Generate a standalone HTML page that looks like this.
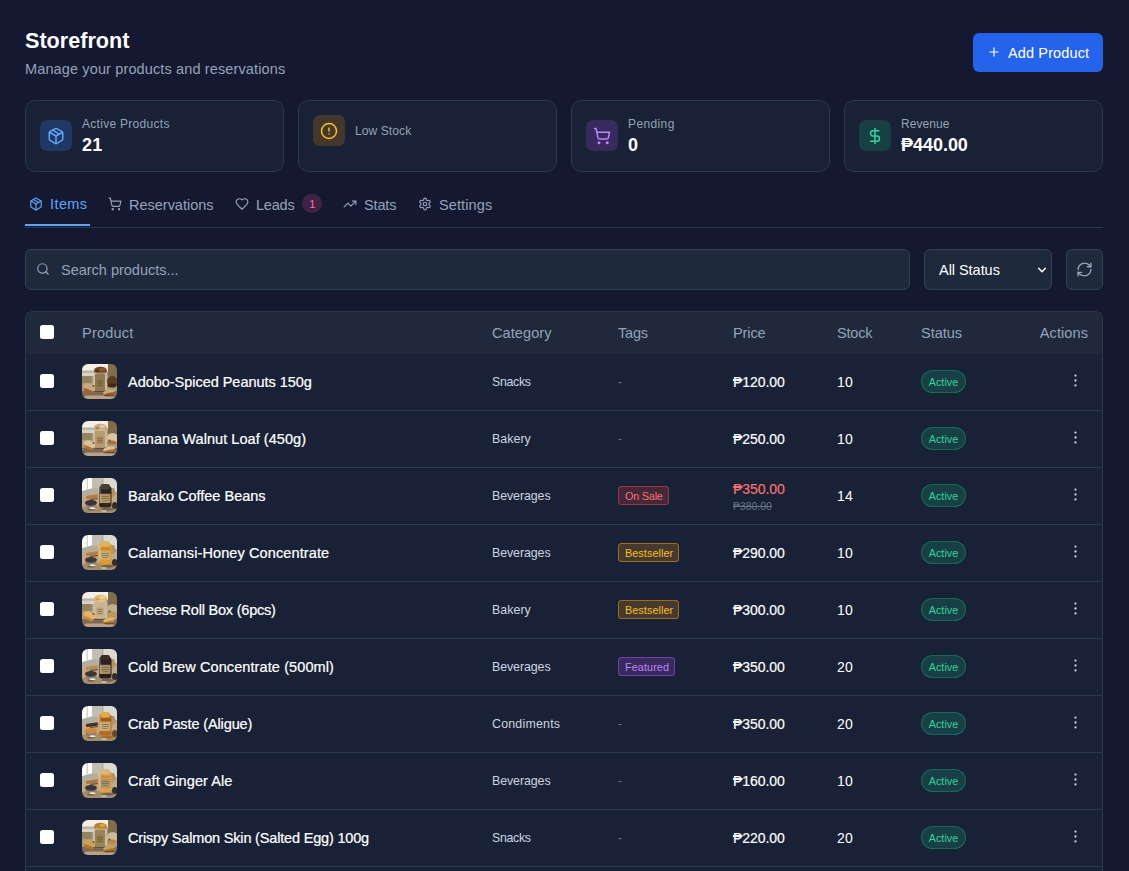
<!DOCTYPE html>
<html lang="en">
<head>
<meta charset="utf-8">
<title>Storefront</title>
<style>
*{box-sizing:border-box;margin:0;padding:0}
html,body{width:1129px;height:871px;overflow:hidden}
body{background:#141831;color:#f1f5f9;font-family:"Liberation Sans",sans-serif;font-size:14px;position:relative}
svg{display:block}
i{font-style:normal}
.ic{fill:none;stroke:currentColor;stroke-width:2;stroke-linecap:round;stroke-linejoin:round}
h1{position:absolute;left:25px;top:27px;font-size:21.600px;line-height:28px;font-weight:700;color:#fff;white-space:nowrap}
.sub{position:absolute;left:25px;top:58px;line-height:21px;color:#94a3b8;white-space:nowrap}
.add{position:absolute;left:973px;top:33px;width:130px;height:39px;background:#2563eb;border-radius:6px;color:#fff;white-space:nowrap}
.add svg{position:absolute;left:14px;top:12px;width:14px;height:14px}
.add .addt{position:absolute;left:35px;top:9px;line-height:21px}
.card{position:absolute;top:100px;width:259px;height:72px;background:#192136;border:1px solid #2c384c;border-radius:10px}
.card .ib{position:absolute;left:14px;top:19px;width:32px;height:31px;border-radius:7px;display:flex;align-items:center;justify-content:center}
.card .ib2{top:14px}
.card .ib svg{width:18px;height:18px}
.card .lb{position:absolute;left:56px;top:14px;font-size:12px;line-height:18px;color:#94a3b8;white-space:nowrap}
.card .lb2{top:21px}
.card .vl{position:absolute;left:56px;top:31px;font-size:18px;line-height:24px;font-weight:700;color:#fff;white-space:nowrap}
.tabs{position:absolute;left:25px;top:184px;width:1078px;height:44px;border-bottom:1px solid #2c384c}
.tab{position:absolute;top:0;height:42px;padding:0 0 2px;display:flex;align-items:center;color:#94a3b8;white-space:nowrap}
.tab svg{width:14px;height:14px;margin-right:7px;flex:none}
.tab .tt{line-height:21px}
.tab.on{color:#60a5fa;border-bottom:2px solid #60a5fa;width:65px;padding:0 4px 1px}
.badge{position:relative;top:-1px;margin-left:8px;width:20px;height:19px;border-radius:10px;background:#3f2246;color:#f472b6;font-size:11px;line-height:19px;text-align:center}
.search{position:absolute;left:25px;top:249px;width:885px;height:41px;background:#1e293b;border:1px solid #334155;border-radius:6px;color:#94a3b8}
.search svg{position:absolute;left:10px;top:12px;width:14px;height:14px}
.search .ph{position:absolute;left:35px;top:9px;line-height:21px;white-space:nowrap}
.sel{position:absolute;left:924px;top:249px;width:128px;height:41px;background:#1e293b;border:1px solid #334155;border-radius:6px;color:#fff}
.sel .sv{position:absolute;left:14px;top:9px;line-height:21px;white-space:nowrap}
.sel svg{position:absolute;left:112px;top:15px;width:10px;height:10px}
.ref{position:absolute;left:1066px;top:249px;width:37px;height:41px;background:#1e293b;border:1px solid #334155;border-radius:6px;color:#94a3b8;display:flex;align-items:center;justify-content:center}
.ref svg{width:17px;height:17px}
.tbl{position:absolute;left:25px;top:311px;width:1078px;height:600px;background:#192136;border:1px solid #2c384c;border-radius:8px}
.row{position:relative;height:57px;border-bottom:1px solid #2c384c}
.row.h{height:42px;background:#1f293b;border-bottom:none;color:#94a3b8}
.row>*{position:absolute;top:50%;transform:translateY(-50%);white-space:nowrap}
.cb{left:14px;width:14px;height:14px;background:#fff;border-radius:2.500px;margin-top:-1px}
.c1{left:56px}.c2{left:466px}.c3{left:592px}.c4{left:707px}.c5{left:811px}.c6{left:895px}.c7{right:14px}
.row.h>*{line-height:20px}
.row.h .cb{margin-top:-1px}
.th{left:56px;width:35px;height:35px;border-radius:6px;overflow:hidden;top:10px;transform:none}
.nm{left:102px;color:#fff;line-height:20px}
.cat{font-size:12px;color:#cbd5e1;line-height:18px}
.dash{font-size:12px;color:#64748b;line-height:18px}
.pr{color:#fff;line-height:20px}
.st{color:#fff;line-height:20px}
.tag{font-size:10.500px;line-height:18.500px;height:19px;padding:0 5px 0 6px;top:18px;transform:none;border-radius:3.500px;border:1px solid}
.t-sale{color:#f87171;background:rgba(239,68,68,.2);border-color:rgba(239,68,68,.5)}
.t-best{color:#fbbf24;background:rgba(245,158,11,.2);border-color:rgba(245,158,11,.5)}
.t-feat{color:#c084fc;background:rgba(168,85,247,.2);border-color:rgba(168,85,247,.5)}
.act{font-size:10.500px;line-height:23px;height:23px;width:45px;text-align:center;border-radius:12px;border:1px solid rgba(16,185,129,.35);background:rgba(16,185,129,.2);color:#34d399;top:16px;transform:none}
.dots{right:18px;width:17px;height:17px;color:#cbd5e1;top:18px;transform:none}
.dots svg{width:17px;height:17px}
.sale{color:#f87171;margin-top:1px}
.sale b{display:block;font-weight:400;line-height:17px;position:relative;top:-.7px}
.sale small{display:block;font-size:10.500px;color:#64748b;text-decoration:line-through;line-height:13px;margin-top:2px}
.sub,.addt,.tt,.ph,.sv,.row.h>div,.nm{font-size:14.500px}
.lb,.cat{font-size:12.400px}
.tag,.act{font-size:10.800px}
.sub,.addt,.vl,.ph,.sv{margin-top:1px}
.tt{position:relative;top:1px}
.badge{line-height:21px}
.sale b{top:0}
.nm{-webkit-text-stroke:.22px currentColor}
.pr,.sale b{-webkit-text-stroke:.18px currentColor}
</style>
</head>
<body>
<svg width="0" height="0" style="position:absolute"><defs><filter id="bl" x="-10%" y="-10%" width="120%" height="120%"><feGaussianBlur stdDeviation="0.550"/></filter></defs></svg>
<h1>Storefront</h1>
<div class="sub" style="letter-spacing:0.13px">Manage your products and reservations</div>
<div class="add"><svg class="ic" viewBox="0 0 24 24"><path d="M5 12h14M12 5v14"/></svg><span class="addt" style="letter-spacing:0.13px">Add Product</span></div>

<div class="card" style="left:25px"><div class="ib" style="background:#1f3864;color:#60a5fa"><svg class="ic" viewBox="0 0 24 24"><path d="m7.5 4.270 9 5.150"/><path d="M21 8a2 2 0 0 0-1-1.730l-7-4a2 2 0 0 0-2 0l-7 4A2 2 0 0 0 3 8v8a2 2 0 0 0 1 1.730l7 4a2 2 0 0 0 2 0l7-4A2 2 0 0 0 21 16Z"/><path d="m3.300 7 8.700 5 8.700-5"/><path d="M12 22V12"/></svg></div><div class="lb" style="letter-spacing:0.29px">Active Products</div><div class="vl" style="letter-spacing:0.28px">21</div></div>
<div class="card" style="left:298px"><div class="ib ib2" style="background:#44382c;color:#fbbf24"><svg class="ic" viewBox="0 0 24 24"><circle cx="12" cy="12" r="10"/><path d="M12 8v4M12 16h.010"/></svg></div><div class="lb lb2" style="letter-spacing:0.10px">Low Stock</div></div>
<div class="card" style="left:571px"><div class="ib" style="background:#362b5c;color:#c084fc"><svg class="ic" viewBox="0 0 24 24"><circle cx="8" cy="21" r="1"/><circle cx="19" cy="21" r="1"/><path d="M2.050 2.050h2l2.660 12.420a2 2 0 0 0 2 1.580h9.780a2 2 0 0 0 1.950-1.570l1.650-7.430H5.120"/></svg></div><div class="lb" style="letter-spacing:0.38px">Pending</div><div class="vl" style="letter-spacing:0.28px">0</div></div>
<div class="card" style="left:844px"><div class="ib" style="background:#183f44;color:#34d399"><svg class="ic" viewBox="0 0 24 24"><path d="M12 2v20"/><path d="M17 5H9.500a3.500 3.500 0 0 0 0 7h5a3.500 3.500 0 0 1 0 7H6"/></svg></div><div class="lb" style="letter-spacing:0.06px">Revenue</div><div class="vl" style="letter-spacing:-0.03px">₱440.00</div></div>

<div class="tabs">
<div class="tab on" style="left:0"><svg class="ic" viewBox="0 0 24 24"><path d="m7.5 4.270 9 5.150"/><path d="M21 8a2 2 0 0 0-1-1.730l-7-4a2 2 0 0 0-2 0l-7 4A2 2 0 0 0 3 8v8a2 2 0 0 0 1 1.730l7 4a2 2 0 0 0 2 0l7-4A2 2 0 0 0 21 16Z"/><path d="m3.300 7 8.700 5 8.700-5"/><path d="M12 22V12"/></svg><span class="tt" style="letter-spacing:0.41px">Items</span></div>
<div class="tab" style="left:83px"><svg class="ic" viewBox="0 0 24 24"><circle cx="8" cy="21" r="1"/><circle cx="19" cy="21" r="1"/><path d="M2.050 2.050h2l2.660 12.420a2 2 0 0 0 2 1.580h9.780a2 2 0 0 0 1.950-1.570l1.650-7.430H5.120"/></svg><span class="tt" style="letter-spacing:-0.01px">Reservations</span></div>
<div class="tab" style="left:210px"><svg class="ic" viewBox="0 0 24 24"><path d="M19 14c1.490-1.460 3-3.210 3-5.500A5.500 5.500 0 0 0 16.500 3c-1.760 0-3 .500-4.500 2-1.500-1.500-2.740-2-4.500-2A5.500 5.500 0 0 0 2 8.500c0 2.300 1.500 4.050 3 5.500l7 7Z"/></svg><span class="tt" style="letter-spacing:-0.22px">Leads</span><i class="badge" style="letter-spacing:0.17px">1</i></div>
<div class="tab" style="left:318px"><svg class="ic" viewBox="0 0 24 24"><path d="M22 7 13.500 15.500 8.500 10.500 2 17"/><path d="M16 7h6v6"/></svg><span class="tt" style="letter-spacing:-0.14px">Stats</span></div>
<div class="tab" style="left:393px"><svg class="ic" viewBox="0 0 24 24"><path d="M12.220 2h-.440a2 2 0 0 0-2 2v.180a2 2 0 0 1-1 1.730l-.430.250a2 2 0 0 1-2 0l-.150-.080a2 2 0 0 0-2.730.730l-.220.380a2 2 0 0 0 .730 2.730l.150.100a2 2 0 0 1 1 1.720v.510a2 2 0 0 1-1 1.740l-.150.090a2 2 0 0 0-.730 2.730l.220.380a2 2 0 0 0 2.730.730l.150-.080a2 2 0 0 1 2 0l.430.250a2 2 0 0 1 1 1.730V20a2 2 0 0 0 2 2h.440a2 2 0 0 0 2-2v-.180a2 2 0 0 1 1-1.730l.430-.250a2 2 0 0 1 2 0l.150.080a2 2 0 0 0 2.730-.730l.220-.390a2 2 0 0 0-.730-2.730l-.150-.080a2 2 0 0 1-1-1.740v-.500a2 2 0 0 1 1-1.740l.150-.090a2 2 0 0 0 .730-2.730l-.220-.380a2 2 0 0 0-2.730-.730l-.150.080a2 2 0 0 1-2 0l-.430-.250a2 2 0 0 1-1-1.730V4a2 2 0 0 0-2-2z"/><circle cx="12" cy="12" r="3"/></svg><span class="tt" style="letter-spacing:0.11px">Settings</span></div>
</div>

<div class="search"><svg class="ic" viewBox="0 0 24 24"><circle cx="11" cy="11" r="8"/><path d="m21 21-4.300-4.300"/></svg><span class="ph" style="letter-spacing:-0.01px">Search products...</span></div>
<div class="sel"><span class="sv" style="letter-spacing:-0.04px">All Status</span><svg class="ic" viewBox="0 0 24 24" style="stroke-width:3.500"><path d="m4 8 8 8 8-8"/></svg></div>
<div class="ref"><svg class="ic" viewBox="0 0 24 24"><path d="M3 12a9 9 0 0 1 9-9 9.750 9.750 0 0 1 6.740 2.740L21 8"/><path d="M21 3v5h-5"/><path d="M21 12a9 9 0 0 1-9 9 9.750 9.750 0 0 1-6.740-2.740L3 16"/><path d="M8 16H3v5"/></svg></div>

<div class="tbl">
<div class="row h"><div class="cb"></div><div class="c1" style="letter-spacing:0.21px">Product</div><div class="c2" style="letter-spacing:0.10px">Category</div><div class="c3" style="letter-spacing:-0.20px">Tags</div><div class="c4" style="letter-spacing:-0.11px">Price</div><div class="c5" style="letter-spacing:-0.17px">Stock</div><div class="c6" style="letter-spacing:-0.02px">Status</div><div class="c7" style="letter-spacing:0.09px">Actions</div></div>
<div class="row"><div class="cb"></div><div class="th"><svg viewBox="0 0 35 35" width="35" height="35"><g filter="url(#bl)"><rect x="-3" y="-3" width="41" height="41" fill="#a8977c"/><rect x="-3" y="-3" width="29" height="10.500" fill="#f3efe7"/><rect x="-3" y="6.500" width="15" height="2" fill="#b9b0a0"/><rect x="-3" y="8.500" width="15" height="3.500" fill="#d8d2c6"/><rect x="26" y="-3" width="12" height="16" fill="#816d4c"/><rect x="-3" y="12" width="12.500" height="7" fill="#93835f"/><rect x="-3" y="19" width="41" height="8" fill="#b09b7c"/><rect x="-3" y="27" width="41" height="11" fill="#7c6a57"/><path d="M4 31.500h26l8 6.500H-3z" fill="#b8a283"/><ellipse cx="18.500" cy="6.500" rx="6.500" ry="3.800" fill="#6f4521"/><ellipse cx="20.500" cy="5.300" rx="3" ry="1.800" fill="#8a5a2c"/><circle cx="15.500" cy="7.500" r="1.300" fill="#3f2918"/><rect x="11" y="8.500" width="14" height="18.500" rx="2" fill="#e6e0d4" opacity=".5"/><rect x="12.300" y="26.300" width="12" height="1.600" rx=".800" fill="#4d3f33" opacity=".7"/><rect x="13" y="9.800" width="10" height="17" rx="1.300" fill="#8f7a50"/><rect x="14.500" y="15.500" width="7" height="7.500" fill="#85714a"/><rect x="15.500" y="17" width="5" height=".800" fill="#5d4a33" opacity=".55"/><rect x="15.500" y="19" width="5" height=".800" fill="#5d4a33" opacity=".55"/><rect x="16" y="21" width="4" height=".800" fill="#5d4a33" opacity=".45"/><ellipse cx="30.500" cy="17.500" rx="5.500" ry="5.500" fill="#5b3c22"/><ellipse cx="30" cy="21.500" rx="4.500" ry="2" fill="#3f2918"/><circle cx="27.500" cy="19.500" r="1.100" fill="#4a3423" opacity=".8"/><ellipse cx="7.500" cy="23.500" rx="6" ry="3.800" fill="#c9ab80" transform="rotate(22 7.500 23.500)"/><ellipse cx="6.500" cy="26.800" rx="5.500" ry="1.500" fill="#a5602a" transform="rotate(22 6.500 26.800)"/><circle cx="11.500" cy="22" r="1.100" fill="#4a3423" opacity=".7"/><ellipse cx="27" cy="28" rx="6" ry="2.400" fill="#c9ab80" transform="rotate(-12 27 28)"/><ellipse cx="27.500" cy="29.800" rx="5.500" ry="1.200" fill="#a5602a" transform="rotate(-12 27.500 29.800)"/><ellipse cx="27" cy="31.500" rx="5" ry=".900" fill="#3d3128" opacity=".6"/></g></svg></div><div class="nm" style="letter-spacing:-0.03px">Adobo-Spiced Peanuts 150g</div><div class="c2 cat" style="letter-spacing:-0.33px">Snacks</div><div class="c3 dash" style="letter-spacing:-0.12px">-</div><div class="c4 pr" style="letter-spacing:-0.05px">₱120.00</div><div class="c5 st" style="letter-spacing:0.23px">10</div><div class="c6 act" style="letter-spacing:0.02px">Active</div><div class="dots"><svg viewBox="0 0 24 24" fill="currentColor"><circle cx="12" cy="5" r="1.600"/><circle cx="12" cy="12" r="1.600"/><circle cx="12" cy="19" r="1.600"/></svg></div></div>
<div class="row"><div class="cb"></div><div class="th"><svg viewBox="0 0 35 35" width="35" height="35"><g filter="url(#bl)"><rect x="-3" y="-3" width="41" height="41" fill="#a8977c"/><rect x="-3" y="-3" width="29" height="10.500" fill="#f3efe7"/><rect x="-3" y="6.500" width="15" height="2" fill="#b9b0a0"/><rect x="-3" y="8.500" width="15" height="3.500" fill="#d8d2c6"/><rect x="26" y="-3" width="12" height="16" fill="#816d4c"/><rect x="-3" y="12" width="12.500" height="7" fill="#93835f"/><rect x="-3" y="19" width="41" height="8" fill="#b09b7c"/><rect x="-3" y="27" width="41" height="11" fill="#7c6a57"/><path d="M4 31.500h26l8 6.500H-3z" fill="#b8a283"/><ellipse cx="18.500" cy="6.500" rx="6.500" ry="3.800" fill="#c9a574"/><ellipse cx="20.500" cy="5.300" rx="3" ry="1.800" fill="#e0c79d"/><circle cx="15.500" cy="7.500" r="1.300" fill="#a87238"/><rect x="11" y="8.500" width="14" height="18.500" rx="2" fill="#e6e0d4" opacity=".5"/><rect x="12.300" y="26.300" width="12" height="1.600" rx=".800" fill="#4d3f33" opacity=".7"/><rect x="13" y="9.800" width="10" height="17" rx="1.300" fill="#b89a6c"/><rect x="14.500" y="15.500" width="7" height="7.500" fill="#a98c5e"/><rect x="15.500" y="17" width="5" height=".800" fill="#5d4a33" opacity=".55"/><rect x="15.500" y="19" width="5" height=".800" fill="#5d4a33" opacity=".55"/><rect x="16" y="21" width="4" height=".800" fill="#5d4a33" opacity=".45"/><ellipse cx="30.500" cy="17.500" rx="5.500" ry="5.500" fill="#dcc6a0"/><ellipse cx="30" cy="21.500" rx="4.500" ry="2" fill="#a87238"/><circle cx="27.500" cy="19.500" r="1.100" fill="#4a3423" opacity=".8"/><ellipse cx="7.500" cy="23.500" rx="6" ry="3.800" fill="#dbc196" transform="rotate(22 7.500 23.500)"/><ellipse cx="6.500" cy="26.800" rx="5.500" ry="1.500" fill="#b07634" transform="rotate(22 6.500 26.800)"/><circle cx="11.500" cy="22" r="1.100" fill="#4a3423" opacity=".7"/><ellipse cx="27" cy="28" rx="6" ry="2.400" fill="#dbc196" transform="rotate(-12 27 28)"/><ellipse cx="27.500" cy="29.800" rx="5.500" ry="1.200" fill="#b07634" transform="rotate(-12 27.500 29.800)"/><ellipse cx="27" cy="31.500" rx="5" ry=".900" fill="#3d3128" opacity=".6"/></g></svg></div><div class="nm" style="letter-spacing:0.05px">Banana Walnut Loaf (450g)</div><div class="c2 cat" style="letter-spacing:0.04px">Bakery</div><div class="c3 dash" style="letter-spacing:-0.12px">-</div><div class="c4 pr" style="letter-spacing:-0.05px">₱250.00</div><div class="c5 st" style="letter-spacing:0.23px">10</div><div class="c6 act" style="letter-spacing:0.02px">Active</div><div class="dots"><svg viewBox="0 0 24 24" fill="currentColor"><circle cx="12" cy="5" r="1.600"/><circle cx="12" cy="12" r="1.600"/><circle cx="12" cy="19" r="1.600"/></svg></div></div>
<div class="row"><div class="cb"></div><div class="th"><svg viewBox="0 0 35 35" width="35" height="35"><g filter="url(#bl)"><rect x="-3" y="-3" width="41" height="41" fill="#c4beb2"/><rect x="21" y="-3" width="17" height="20" fill="#dcd9d1"/><rect x="20.300" y="-3" width="1" height="18" fill="#aaa397"/><path d="M-3-3h13v13.500L-3 14z" fill="#fcfcfa"/><rect x="4.600" y="-3" width="1.400" height="15" fill="#d4d3cc"/><path d="M-3 14 10 10.500h6V15L-3 19.500z" fill="#b3ad9f"/><path d="M-3 19.500 16 15l22-1v24H-3z" fill="#c2a884"/><path d="M-3 29 38 26.500V38H-3z" fill="#a68d6b"/><rect x="4" y="17" width="12" height="3.400" rx="1.500" fill="#b97a3c" transform="rotate(-8 10 19)"/><rect x="8" y="20.300" width="8" height="1.300" rx=".600" fill="#3b2c20" opacity=".7" transform="rotate(-6 12 21)"/><ellipse cx="9" cy="27" rx="5.600" ry="4.200" fill="#8a8279"/><ellipse cx="9" cy="24.800" rx="6" ry="2.900" fill="#3a3331"/><ellipse cx="10.500" cy="30.300" rx="3" ry="1.100" fill="#eeeae2"/><ellipse cx="9" cy="31.800" rx="4" ry=".800" fill="#3a2f28" opacity=".55"/><path d="M27.500 10h4.500l2.300 6-3.800 3.500h-3z" fill="#b29463"/><rect x="17" y="8" width="12.500" height="21.500" rx="3.200" fill="#33261f"/><rect x="18.500" y="6" width="9.500" height="5.500" rx="2.200" fill="#4a4036"/><rect x="17.800" y="12.500" width="11" height="2.600" fill="#2a2330" opacity=".75"/><rect x="18" y="15.800" width="10.500" height="9.200" rx=".800" fill="#b3935f"/><rect x="19.500" y="18" width="7.500" height=".800" fill="#5a4630" opacity=".55"/><rect x="19.500" y="20" width="7.500" height=".800" fill="#5a4630" opacity=".55"/><rect x="20.500" y="22" width="5.500" height=".800" fill="#5a4630" opacity=".45"/><rect x="17.300" y="9.500" width="1.200" height="16" rx=".600" fill="#fff" opacity=".4"/><ellipse cx="32.800" cy="27.500" rx="2.800" ry="3.600" fill="#352b27"/><ellipse cx="25.500" cy="31.300" rx="6.500" ry="1.500" fill="#6f6254"/><ellipse cx="22" cy="33" rx="3" ry=".900" fill="#d9d2c2" opacity=".7"/></g></svg></div><div class="nm">Barako Coffee Beans</div><div class="c2 cat" style="letter-spacing:-0.08px">Beverages</div><div class="c3 tag t-sale" style="letter-spacing:-0.19px">On Sale</div><div class="c4 sale"><b style="letter-spacing:-0.05px">₱350.00</b><small style="letter-spacing:-0.04px">₱380.00</small></div><div class="c5 st" style="letter-spacing:0.23px">14</div><div class="c6 act" style="letter-spacing:0.02px">Active</div><div class="dots"><svg viewBox="0 0 24 24" fill="currentColor"><circle cx="12" cy="5" r="1.600"/><circle cx="12" cy="12" r="1.600"/><circle cx="12" cy="19" r="1.600"/></svg></div></div>
<div class="row"><div class="cb"></div><div class="th"><svg viewBox="0 0 35 35" width="35" height="35"><g filter="url(#bl)"><rect x="-3" y="-3" width="41" height="41" fill="#c4beb2"/><rect x="21" y="-3" width="17" height="20" fill="#dcd9d1"/><rect x="20.300" y="-3" width="1" height="18" fill="#aaa397"/><path d="M-3-3h13v13.500L-3 14z" fill="#fcfcfa"/><rect x="4.600" y="-3" width="1.400" height="15" fill="#d4d3cc"/><path d="M-3 14 10 10.500h6V15L-3 19.500z" fill="#b3ad9f"/><path d="M-3 19.500 16 15l22-1v24H-3z" fill="#c2a884"/><path d="M-3 29 38 26.500V38H-3z" fill="#a68d6b"/><rect x="4" y="17" width="12" height="3.400" rx="1.500" fill="#b97a3c" transform="rotate(-8 10 19)"/><rect x="8" y="20.300" width="8" height="1.300" rx=".600" fill="#3b2c20" opacity=".7" transform="rotate(-6 12 21)"/><ellipse cx="9" cy="27" rx="5.600" ry="4.200" fill="#8a8279"/><ellipse cx="9" cy="24.800" rx="6" ry="2.900" fill="#3f3836"/><ellipse cx="10.500" cy="30.300" rx="3" ry="1.100" fill="#eeeae2"/><ellipse cx="9" cy="31.800" rx="4" ry=".800" fill="#3a2f28" opacity=".55"/><path d="M27.500 10h4.500l2.300 6-3.800 3.500h-3z" fill="#b29463"/><rect x="17" y="8" width="12.500" height="21.500" rx="3.200" fill="#de9a2c"/><rect x="18.500" y="6" width="9.500" height="5.500" rx="2.200" fill="#d9b46a"/><rect x="17.800" y="12.500" width="11" height="2.600" fill="#c9801e" opacity=".75"/><rect x="18" y="15.800" width="10.500" height="9.200" rx=".800" fill="#c9aa72"/><rect x="19.500" y="18" width="7.500" height=".800" fill="#5a4630" opacity=".55"/><rect x="19.500" y="20" width="7.500" height=".800" fill="#5a4630" opacity=".55"/><rect x="20.500" y="22" width="5.500" height=".800" fill="#5a4630" opacity=".45"/><rect x="17.300" y="9.500" width="1.200" height="16" rx=".600" fill="#fff" opacity=".4"/><ellipse cx="32.800" cy="27.500" rx="2.800" ry="3.600" fill="#352b27"/><ellipse cx="25.500" cy="31.300" rx="6.500" ry="1.500" fill="#6f6254"/><ellipse cx="22" cy="33" rx="3" ry=".900" fill="#d9d2c2" opacity=".7"/></g></svg></div><div class="nm" style="letter-spacing:0.11px">Calamansi-Honey Concentrate</div><div class="c2 cat" style="letter-spacing:-0.08px">Beverages</div><div class="c3 tag t-best" style="letter-spacing:0.08px">Bestseller</div><div class="c4 pr" style="letter-spacing:-0.05px">₱290.00</div><div class="c5 st" style="letter-spacing:0.23px">10</div><div class="c6 act" style="letter-spacing:0.02px">Active</div><div class="dots"><svg viewBox="0 0 24 24" fill="currentColor"><circle cx="12" cy="5" r="1.600"/><circle cx="12" cy="12" r="1.600"/><circle cx="12" cy="19" r="1.600"/></svg></div></div>
<div class="row"><div class="cb"></div><div class="th"><svg viewBox="0 0 35 35" width="35" height="35"><g filter="url(#bl)"><rect x="-3" y="-3" width="41" height="41" fill="#a8977c"/><rect x="-3" y="-3" width="29" height="10.500" fill="#f3efe7"/><rect x="-3" y="6.500" width="15" height="2" fill="#b9b0a0"/><rect x="-3" y="8.500" width="15" height="3.500" fill="#d8d2c6"/><rect x="26" y="-3" width="12" height="16" fill="#816d4c"/><rect x="-3" y="12" width="12.500" height="7" fill="#93835f"/><rect x="-3" y="19" width="41" height="8" fill="#b09b7c"/><rect x="-3" y="27" width="41" height="11" fill="#7c6a57"/><path d="M4 31.500h26l8 6.500H-3z" fill="#b8a283"/><ellipse cx="18.500" cy="6.500" rx="6.500" ry="3.800" fill="#e2b56c"/><ellipse cx="20.500" cy="5.300" rx="3" ry="1.800" fill="#f0d092"/><circle cx="15.500" cy="7.500" r="1.300" fill="#c9954a"/><rect x="11" y="8.500" width="14" height="18.500" rx="2" fill="#e6e0d4" opacity=".5"/><rect x="12.300" y="26.300" width="12" height="1.600" rx=".800" fill="#4d3f33" opacity=".7"/><rect x="13" y="9.800" width="10" height="17" rx="1.300" fill="#cbb58c"/><rect x="14.500" y="15.500" width="7" height="7.500" fill="#bba57c"/><rect x="15.500" y="17" width="5" height=".800" fill="#5d4a33" opacity=".55"/><rect x="15.500" y="19" width="5" height=".800" fill="#5d4a33" opacity=".55"/><rect x="16" y="21" width="4" height=".800" fill="#5d4a33" opacity=".45"/><ellipse cx="30.500" cy="17.500" rx="5.500" ry="5.500" fill="#bfae90"/><ellipse cx="30" cy="21.500" rx="4.500" ry="2" fill="#c9954a"/><circle cx="27.500" cy="19.500" r="1.100" fill="#4a3423" opacity=".8"/><ellipse cx="7.500" cy="23.500" rx="6" ry="3.800" fill="#e3b465" transform="rotate(22 7.500 23.500)"/><ellipse cx="6.500" cy="26.800" rx="5.500" ry="1.500" fill="#c98a36" transform="rotate(22 6.500 26.800)"/><circle cx="11.500" cy="22" r="1.100" fill="#4a3423" opacity=".7"/><ellipse cx="27" cy="28" rx="6" ry="2.400" fill="#e3b465" transform="rotate(-12 27 28)"/><ellipse cx="27.500" cy="29.800" rx="5.500" ry="1.200" fill="#c98a36" transform="rotate(-12 27.500 29.800)"/><ellipse cx="27" cy="31.500" rx="5" ry=".900" fill="#3d3128" opacity=".6"/></g></svg></div><div class="nm" style="letter-spacing:-0.21px">Cheese Roll Box (6pcs)</div><div class="c2 cat" style="letter-spacing:0.04px">Bakery</div><div class="c3 tag t-best" style="letter-spacing:0.08px">Bestseller</div><div class="c4 pr" style="letter-spacing:-0.05px">₱300.00</div><div class="c5 st" style="letter-spacing:0.23px">10</div><div class="c6 act" style="letter-spacing:0.02px">Active</div><div class="dots"><svg viewBox="0 0 24 24" fill="currentColor"><circle cx="12" cy="5" r="1.600"/><circle cx="12" cy="12" r="1.600"/><circle cx="12" cy="19" r="1.600"/></svg></div></div>
<div class="row"><div class="cb"></div><div class="th"><svg viewBox="0 0 35 35" width="35" height="35"><g filter="url(#bl)"><rect x="-3" y="-3" width="41" height="41" fill="#c4beb2"/><rect x="21" y="-3" width="17" height="20" fill="#dcd9d1"/><rect x="20.300" y="-3" width="1" height="18" fill="#aaa397"/><path d="M-3-3h13v13.500L-3 14z" fill="#fcfcfa"/><rect x="4.600" y="-3" width="1.400" height="15" fill="#d4d3cc"/><path d="M-3 14 10 10.500h6V15L-3 19.500z" fill="#b3ad9f"/><path d="M-3 19.500 16 15l22-1v24H-3z" fill="#c2a884"/><path d="M-3 29 38 26.500V38H-3z" fill="#a68d6b"/><rect x="4" y="17" width="12" height="3.400" rx="1.500" fill="#b98a55" transform="rotate(-8 10 19)"/><rect x="8" y="20.300" width="8" height="1.300" rx=".600" fill="#3b2c20" opacity=".7" transform="rotate(-6 12 21)"/><ellipse cx="9" cy="27" rx="5.600" ry="4.200" fill="#8a8279"/><ellipse cx="9" cy="24.800" rx="6" ry="2.900" fill="#3b3433"/><ellipse cx="10.500" cy="30.300" rx="3" ry="1.100" fill="#eeeae2"/><ellipse cx="9" cy="31.800" rx="4" ry=".800" fill="#3a2f28" opacity=".55"/><path d="M27.500 10h4.500l2.300 6-3.800 3.500h-3z" fill="#b29463"/><rect x="17" y="8" width="12.500" height="21.500" rx="3.200" fill="#2b1e1b"/><rect x="18.500" y="6" width="9.500" height="5.500" rx="2.200" fill="#3a2c27"/><rect x="17.800" y="12.500" width="11" height="2.600" fill="#2a2330" opacity=".75"/><rect x="18" y="15.800" width="10.500" height="9.200" rx=".800" fill="#a98d64"/><rect x="19.500" y="18" width="7.500" height=".800" fill="#5a4630" opacity=".55"/><rect x="19.500" y="20" width="7.500" height=".800" fill="#5a4630" opacity=".55"/><rect x="20.500" y="22" width="5.500" height=".800" fill="#5a4630" opacity=".45"/><rect x="17.300" y="9.500" width="1.200" height="16" rx=".600" fill="#fff" opacity=".4"/><ellipse cx="32.800" cy="27.500" rx="2.800" ry="3.600" fill="#352b27"/><ellipse cx="25.500" cy="31.300" rx="6.500" ry="1.500" fill="#6f6254"/><ellipse cx="22" cy="33" rx="3" ry=".900" fill="#d9d2c2" opacity=".7"/></g></svg></div><div class="nm" style="letter-spacing:0.10px">Cold Brew Concentrate (500ml)</div><div class="c2 cat" style="letter-spacing:-0.08px">Beverages</div><div class="c3 tag t-feat" style="letter-spacing:0.11px">Featured</div><div class="c4 pr" style="letter-spacing:-0.05px">₱350.00</div><div class="c5 st" style="letter-spacing:0.23px">20</div><div class="c6 act" style="letter-spacing:0.02px">Active</div><div class="dots"><svg viewBox="0 0 24 24" fill="currentColor"><circle cx="12" cy="5" r="1.600"/><circle cx="12" cy="12" r="1.600"/><circle cx="12" cy="19" r="1.600"/></svg></div></div>
<div class="row"><div class="cb"></div><div class="th"><svg viewBox="0 0 35 35" width="35" height="35"><g filter="url(#bl)"><rect x="-3" y="-3" width="41" height="41" fill="#c4beb2"/><rect x="21" y="-3" width="17" height="20" fill="#dcd9d1"/><rect x="20.300" y="-3" width="1" height="18" fill="#aaa397"/><path d="M-3-3h13v13.500L-3 14z" fill="#fcfcfa"/><rect x="4.600" y="-3" width="1.400" height="15" fill="#d4d3cc"/><path d="M-3 14 10 10.500h6V15L-3 19.500z" fill="#b3ad9f"/><path d="M-3 19.500 16 15l22-1v24H-3z" fill="#c2a884"/><path d="M-3 29 38 26.500V38H-3z" fill="#a68d6b"/><rect x="4" y="17" width="12" height="3.400" rx="1.500" fill="#3c3026" transform="rotate(-8 10 19)"/><rect x="8" y="20.300" width="8" height="1.300" rx=".600" fill="#3b2c20" opacity=".7" transform="rotate(-6 12 21)"/><ellipse cx="9" cy="27" rx="5.600" ry="4.200" fill="#8a8279"/><ellipse cx="9" cy="24.800" rx="6" ry="2.900" fill="#d18a3c"/><ellipse cx="10.500" cy="30.300" rx="3" ry="1.100" fill="#eeeae2"/><ellipse cx="9" cy="31.800" rx="4" ry=".800" fill="#3a2f28" opacity=".55"/><path d="M27.500 10h4.500l2.300 6-3.800 3.500h-3z" fill="#b29463"/><rect x="17" y="8" width="12.500" height="21.500" rx="3.200" fill="#b9691f"/><rect x="18.500" y="6" width="9.500" height="5.500" rx="2.200" fill="#e5a94e"/><rect x="17.800" y="12.500" width="11" height="2.600" fill="#9a5416" opacity=".75"/><rect x="18" y="15.800" width="10.500" height="9.200" rx=".800" fill="#c5a878"/><rect x="19.500" y="18" width="7.500" height=".800" fill="#5a4630" opacity=".55"/><rect x="19.500" y="20" width="7.500" height=".800" fill="#5a4630" opacity=".55"/><rect x="20.500" y="22" width="5.500" height=".800" fill="#5a4630" opacity=".45"/><rect x="17.300" y="9.500" width="1.200" height="16" rx=".600" fill="#fff" opacity=".4"/><ellipse cx="32.800" cy="27.500" rx="2.800" ry="3.600" fill="#6b4a2a"/><ellipse cx="25.500" cy="31.300" rx="6.500" ry="1.500" fill="#a8682c"/><ellipse cx="22" cy="33" rx="3" ry=".900" fill="#d9d2c2" opacity=".7"/></g></svg></div><div class="nm" style="letter-spacing:-0.12px">Crab Paste (Aligue)</div><div class="c2 cat" style="letter-spacing:0.21px">Condiments</div><div class="c3 dash" style="letter-spacing:-0.12px">-</div><div class="c4 pr" style="letter-spacing:-0.05px">₱350.00</div><div class="c5 st" style="letter-spacing:0.23px">20</div><div class="c6 act" style="letter-spacing:0.02px">Active</div><div class="dots"><svg viewBox="0 0 24 24" fill="currentColor"><circle cx="12" cy="5" r="1.600"/><circle cx="12" cy="12" r="1.600"/><circle cx="12" cy="19" r="1.600"/></svg></div></div>
<div class="row"><div class="cb"></div><div class="th"><svg viewBox="0 0 35 35" width="35" height="35"><g filter="url(#bl)"><rect x="-3" y="-3" width="41" height="41" fill="#c4beb2"/><rect x="21" y="-3" width="17" height="20" fill="#dcd9d1"/><rect x="20.300" y="-3" width="1" height="18" fill="#aaa397"/><path d="M-3-3h13v13.500L-3 14z" fill="#fcfcfa"/><rect x="4.600" y="-3" width="1.400" height="15" fill="#d4d3cc"/><path d="M-3 14 10 10.500h6V15L-3 19.500z" fill="#b3ad9f"/><path d="M-3 19.500 16 15l22-1v24H-3z" fill="#c2a884"/><path d="M-3 29 38 26.500V38H-3z" fill="#a68d6b"/><rect x="4" y="17" width="12" height="3.400" rx="1.500" fill="#a9763f" transform="rotate(-8 10 19)"/><rect x="8" y="20.300" width="8" height="1.300" rx=".600" fill="#3b2c20" opacity=".7" transform="rotate(-6 12 21)"/><ellipse cx="9" cy="27" rx="5.600" ry="4.200" fill="#8a8279"/><ellipse cx="9" cy="24.800" rx="6" ry="2.900" fill="#3d3634"/><ellipse cx="10.500" cy="30.300" rx="3" ry="1.100" fill="#eeeae2"/><ellipse cx="9" cy="31.800" rx="4" ry=".800" fill="#3a2f28" opacity=".55"/><path d="M27.500 10h4.500l2.300 6-3.800 3.500h-3z" fill="#b29463"/><rect x="17" y="8" width="12.500" height="21.500" rx="3.200" fill="#e0a04a"/><rect x="18.500" y="6" width="9.500" height="5.500" rx="2.200" fill="#d8b683"/><rect x="17.800" y="12.500" width="11" height="2.600" fill="#c98a3a" opacity=".75"/><rect x="18" y="15.800" width="10.500" height="9.200" rx=".800" fill="#ad946c"/><rect x="19.500" y="18" width="7.500" height=".800" fill="#5a4630" opacity=".55"/><rect x="19.500" y="20" width="7.500" height=".800" fill="#5a4630" opacity=".55"/><rect x="20.500" y="22" width="5.500" height=".800" fill="#5a4630" opacity=".45"/><rect x="17.300" y="9.500" width="1.200" height="16" rx=".600" fill="#fff" opacity=".4"/><ellipse cx="32.800" cy="27.500" rx="2.800" ry="3.600" fill="#352b27"/><ellipse cx="25.500" cy="31.300" rx="6.500" ry="1.500" fill="#6f6254"/><ellipse cx="22" cy="33" rx="3" ry=".900" fill="#d9d2c2" opacity=".7"/></g></svg></div><div class="nm" style="letter-spacing:0.08px">Craft Ginger Ale</div><div class="c2 cat" style="letter-spacing:-0.08px">Beverages</div><div class="c3 dash" style="letter-spacing:-0.12px">-</div><div class="c4 pr" style="letter-spacing:-0.05px">₱160.00</div><div class="c5 st" style="letter-spacing:0.23px">10</div><div class="c6 act" style="letter-spacing:0.02px">Active</div><div class="dots"><svg viewBox="0 0 24 24" fill="currentColor"><circle cx="12" cy="5" r="1.600"/><circle cx="12" cy="12" r="1.600"/><circle cx="12" cy="19" r="1.600"/></svg></div></div>
<div class="row"><div class="cb"></div><div class="th"><svg viewBox="0 0 35 35" width="35" height="35"><g filter="url(#bl)"><rect x="-3" y="-3" width="41" height="41" fill="#a8977c"/><rect x="-3" y="-3" width="29" height="10.500" fill="#f3efe7"/><rect x="-3" y="6.500" width="15" height="2" fill="#b9b0a0"/><rect x="-3" y="8.500" width="15" height="3.500" fill="#d8d2c6"/><rect x="26" y="-3" width="12" height="16" fill="#816d4c"/><rect x="-3" y="12" width="12.500" height="7" fill="#93835f"/><rect x="-3" y="19" width="41" height="8" fill="#b09b7c"/><rect x="-3" y="27" width="41" height="11" fill="#7c6a57"/><path d="M4 31.500h26l8 6.500H-3z" fill="#b8a283"/><ellipse cx="18.500" cy="6.500" rx="6.500" ry="3.800" fill="#b9802c"/><ellipse cx="20.500" cy="5.300" rx="3" ry="1.800" fill="#d9a440"/><circle cx="15.500" cy="7.500" r="1.300" fill="#b98a3c"/><rect x="11" y="8.500" width="14" height="18.500" rx="2" fill="#e6e0d4" opacity=".5"/><rect x="12.300" y="26.300" width="12" height="1.600" rx=".800" fill="#4d3f33" opacity=".7"/><rect x="13" y="9.800" width="10" height="17" rx="1.300" fill="#9a8455"/><rect x="14.500" y="15.500" width="7" height="7.500" fill="#8c784c"/><rect x="15.500" y="17" width="5" height=".800" fill="#5d4a33" opacity=".55"/><rect x="15.500" y="19" width="5" height=".800" fill="#5d4a33" opacity=".55"/><rect x="16" y="21" width="4" height=".800" fill="#5d4a33" opacity=".45"/><ellipse cx="30.500" cy="17.500" rx="5.500" ry="5.500" fill="#cbb995"/><ellipse cx="30" cy="21.500" rx="4.500" ry="2" fill="#b98a3c"/><circle cx="27.500" cy="19.500" r="1.100" fill="#4a3423" opacity=".8"/><ellipse cx="7.500" cy="23.500" rx="6" ry="3.800" fill="#c9a05c" transform="rotate(22 7.500 23.500)"/><ellipse cx="6.500" cy="26.800" rx="5.500" ry="1.500" fill="#b5781f" transform="rotate(22 6.500 26.800)"/><circle cx="11.500" cy="22" r="1.100" fill="#4a3423" opacity=".7"/><ellipse cx="27" cy="28" rx="6" ry="2.400" fill="#c9a05c" transform="rotate(-12 27 28)"/><ellipse cx="27.500" cy="29.800" rx="5.500" ry="1.200" fill="#b5781f" transform="rotate(-12 27.500 29.800)"/><ellipse cx="27" cy="31.500" rx="5" ry=".900" fill="#3d3128" opacity=".6"/></g></svg></div><div class="nm" style="letter-spacing:-0.18px">Crispy Salmon Skin (Salted Egg) 100g</div><div class="c2 cat" style="letter-spacing:-0.33px">Snacks</div><div class="c3 dash" style="letter-spacing:-0.12px">-</div><div class="c4 pr" style="letter-spacing:-0.05px">₱220.00</div><div class="c5 st" style="letter-spacing:0.23px">20</div><div class="c6 act" style="letter-spacing:0.02px">Active</div><div class="dots"><svg viewBox="0 0 24 24" fill="currentColor"><circle cx="12" cy="5" r="1.600"/><circle cx="12" cy="12" r="1.600"/><circle cx="12" cy="19" r="1.600"/></svg></div></div>
</div>
</body>
</html>
